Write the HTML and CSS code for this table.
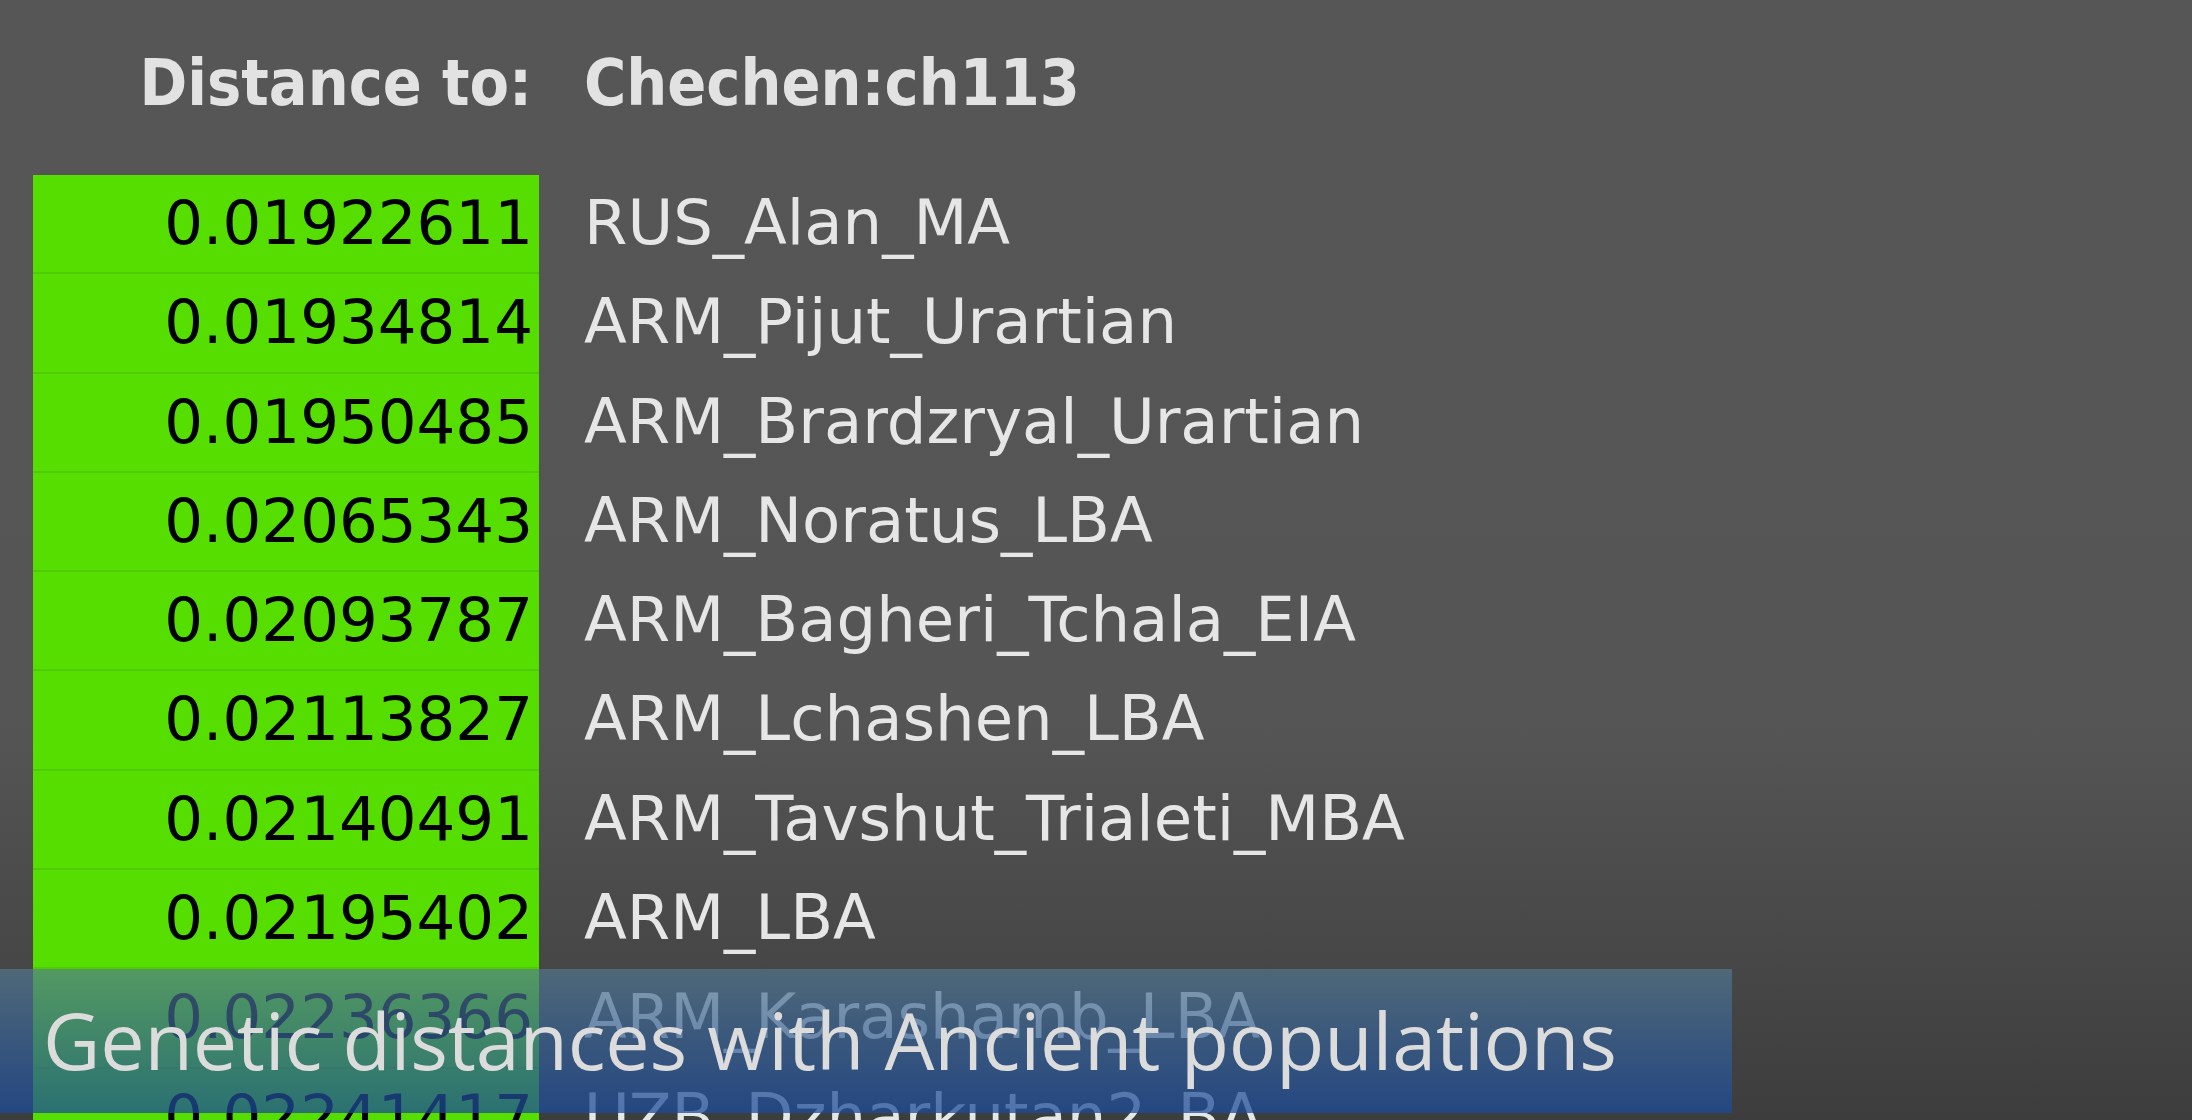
FILE: index.html
```html
<!DOCTYPE html>
<html lang="en">
<head>
<meta charset="utf-8">
<title>Distance to: Chechen:ch113</title>
<link rel="stylesheet" href="styles.css">
</head>
<body>
<main class="screen">
  <header class="dist-head">
    <span class="dist-label">Distance to:</span>
    <span class="dist-target">Chechen:ch113</span>
  </header>
  <section class="dist-table">
    <div class="dist-row"><span class="dist-val">0.01922611</span><span class="dist-pop">RUS_Alan_MA</span></div>
    <div class="dist-row"><span class="dist-val">0.01934814</span><span class="dist-pop">ARM_Pijut_Urartian</span></div>
    <div class="dist-row"><span class="dist-val">0.01950485</span><span class="dist-pop">ARM_Brardzryal_Urartian</span></div>
    <div class="dist-row"><span class="dist-val">0.02065343</span><span class="dist-pop">ARM_Noratus_LBA</span></div>
    <div class="dist-row"><span class="dist-val">0.02093787</span><span class="dist-pop">ARM_Bagheri_Tchala_EIA</span></div>
    <div class="dist-row"><span class="dist-val">0.02113827</span><span class="dist-pop">ARM_Lchashen_LBA</span></div>
    <div class="dist-row"><span class="dist-val">0.02140491</span><span class="dist-pop">ARM_Tavshut_Trialeti_MBA</span></div>
    <div class="dist-row"><span class="dist-val">0.02195402</span><span class="dist-pop">ARM_LBA</span></div>
    <div class="dist-row"><span class="dist-val">0.02236366</span><span class="dist-pop">ARM_Karashamb_LBA</span></div>
    <div class="dist-row"><span class="dist-val">0.02241417</span><span class="dist-pop">UZB_Dzharkutan2_BA</span></div>
  </section>
  <div class="caption">
    <span class="caption-text">Genetic distances with Ancient populations</span>
  </div>
</main>
</body>
</html>
```

FILE: styles.css
```css
html, body {
  margin: 0;
  padding: 0;
  height: 1120px;
  overflow: hidden;
}

body {
  background: linear-gradient(to bottom, #565656 0px, #555555 720px, #3d3d3d 1120px);
  font-family: "DejaVu Sans", Verdana, sans-serif;
}

.screen {
  position: relative;
  height: 1120px;
  padding: 48px 0 0 33px;
  box-sizing: border-box;
}

.dist-head {
  display: grid;
  grid-template-columns: 506px auto;
  column-gap: 45px;
  height: 70px;
  line-height: 70px;
  margin-bottom: 57px;
  font-family: "DejaVu Sans Condensed", "DejaVu Sans", sans-serif;
  font-weight: bold;
  font-size: 64px;
  color: #e2e2e2;
}

.dist-label {
  text-align: right;
  padding-right: 7px;
}

.dist-table {
  display: grid;
  grid-template-columns: 506px auto;
  grid-auto-rows: 99.3px;
  column-gap: 45px;
}

.dist-row {
  display: contents;
}

.dist-val {
  background: #55de00;
  color: #000;
  text-align: right;
  padding-right: 6px;
  font-size: 61px;
  line-height: 95px;
  border-bottom: 2px solid #4fcc00;
}

.dist-pop {
  color: #e6e6e6;
  font-size: 62.5px;
  line-height: 95px;
}

.caption {
  position: absolute;
  left: 0;
  top: 969px;
  width: 1732px;
  height: 144px;
  background: linear-gradient(to bottom, rgba(82, 120, 144, 0.68), rgba(28, 74, 153, 0.74));
  box-sizing: border-box;
  padding-left: 43px;
}

.caption-text {
  display: block;
  font-family: "Open Sans", "Noto Sans", sans-serif;
  font-weight: 400;
  font-size: 79px;
  letter-spacing: -0.2px;
  line-height: 141px;
  color: #dcdcdc;
}
```
